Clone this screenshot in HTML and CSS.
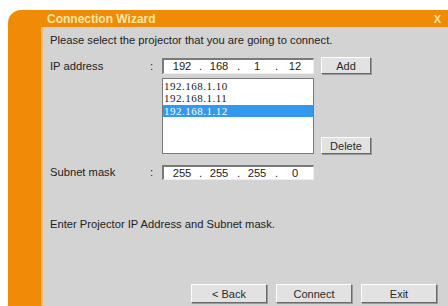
FILE: index.html
```html
<!DOCTYPE html>
<html>
<head>
<meta charset="utf-8">
<link rel="stylesheet" href="styles.css">
</head>
<body>
<div class="window">
  <div class="titlebar">
    <span class="title">Connection Wizard</span>
    <span class="close">X</span>
  </div>
  <div class="main">
    <div class="strip"></div>
    <div class="content">
      <p class="intro">Please select the projector that you are going to connect.</p>
      <div class="form">
        <span class="label">IP address</span>
        <span class="colon">:</span>
        <div class="ipbox">
          <span class="seg">192</span><span class="dot">.</span><span class="seg">168</span><span class="dot">.</span><span class="seg">1</span><span class="dot">.</span><span class="seg">12</span>
        </div>
        <button class="btn small">Add</button>

        <div class="listbox">
          <div class="item">192.168.1.10</div>
          <div class="item">192.168.1.11</div>
          <div class="item selected">192.168.1.12</div>
        </div>
        <button class="btn small delete">Delete</button>

        <span class="label subnet">Subnet mask</span>
        <span class="colon subnet">:</span>
        <div class="ipbox subnet">
          <span class="seg">255</span><span class="dot">.</span><span class="seg">255</span><span class="dot">.</span><span class="seg">255</span><span class="dot">.</span><span class="seg">0</span>
        </div>
      </div>
      <p class="message">Enter Projector IP Address and Subnet mask.</p>
      <div class="actions">
        <button class="btn wide">&lt; Back</button>
        <button class="btn wide">Connect</button>
        <button class="btn wide">Exit</button>
      </div>
    </div>
  </div>
</div>
</body>
</html>
```
FILE: styles.css
```css
html, body {
  margin: 0;
  padding: 0;
  background: #ffffff;
  width: 448px;
  height: 306px;
  overflow: hidden;
}

.window {
  margin: 10px 0 0 8px;
  height: 296px;
  background: #ef8b06;
  border-top-left-radius: 13px;
  display: flex;
  flex-direction: column;
  font-family: "Liberation Sans", Arial, sans-serif;
  font-size: 11.2px;
  color: #222222;
}

.titlebar {
  height: 17px;
  display: flex;
  align-items: center;
  justify-content: space-between;
  padding: 0 7px 0 39px;
}

.title {
  font-weight: bold;
  font-size: 12px;
  color: #fde7a6;
}

.close {
  font-weight: bold;
  font-size: 11px;
  color: #fde7a6;
}

.main {
  flex: 1;
  display: flex;
}

.strip {
  width: 33px;
  border-right: 2px solid #f5b866;
}

.content {
  flex: 1;
  background: #d3d3d3;
  padding: 7px 11px 3px 7px;
  display: flex;
  flex-direction: column;
}

.intro {
  margin: 0;
  line-height: 13px;
}

.form {
  margin-top: 10px;
  display: grid;
  grid-template-columns: 98px 14px 152px 50px;
  align-items: center;
}

.form .btn.small {
  margin-left: 7px;
}

.label, .colon {
  line-height: 16px;
}

.colon {
  padding-left: 2px;
}

.ipbox {
  height: 16px;
  box-sizing: border-box;
  background: #ffffff;
  border-top: 2px solid #7a7a7a;
  border-left: 2px solid #7a7a7a;
  border-right: 1px solid #eeeeee;
  border-bottom: 1px solid #eeeeee;
  display: flex;
  align-items: center;
}

.seg {
  width: 38px;
  text-align: center;
  flex: none;
}

.ipbox .seg:first-child {
  width: 36px;
}

.dot {
  width: 0;
  display: inline-block;
  text-align: center;
  position: relative;
  left: -1px;
  flex: none;
}

.listbox {
  grid-column: 3;
  grid-row: 2;
  margin-top: 4px;
  height: 76px;
  box-sizing: border-box;
  background: #ffffff;
  border: 1px solid #7a7a7a;
  padding: 1px 0 0 0;
  font-family: "Liberation Serif", "Times New Roman", serif;
  font-size: 11px;
  letter-spacing: 0.5px;
  color: #1a1a1a;
}

.item {
  line-height: 12.3px;
  height: 12.3px;
  padding-left: 1px;
}

.item.selected {
  background: #3399ee;
  color: #ffffff;
}

.delete {
  grid-column: 4;
  grid-row: 2;
  align-self: end;
}

.subnet {
  grid-row: 3;
  margin-top: 10px;
}

.ipbox.subnet {
  height: 15px;
}

.btn {
  font-family: "Liberation Sans", Arial, sans-serif;
  font-size: 11px;
  color: #2a2a2a;
  background: #e2e2e2;
  border: 1px solid;
  border-color: #ffffff #6a6a6a #6a6a6a #ffffff;
  box-shadow: 1px 1px 0 #9a9a9a;
  padding: 0;
  margin: 0;
}

.btn.small {
  width: 50px;
  height: 17px;
}

.message {
  margin: 38px 0 0 0;
  line-height: 13px;
}

.actions {
  margin-top: auto;
  display: flex;
  justify-content: flex-end;
  gap: 9px;
}

.btn.wide {
  width: 76px;
  height: 19px;
}
```
